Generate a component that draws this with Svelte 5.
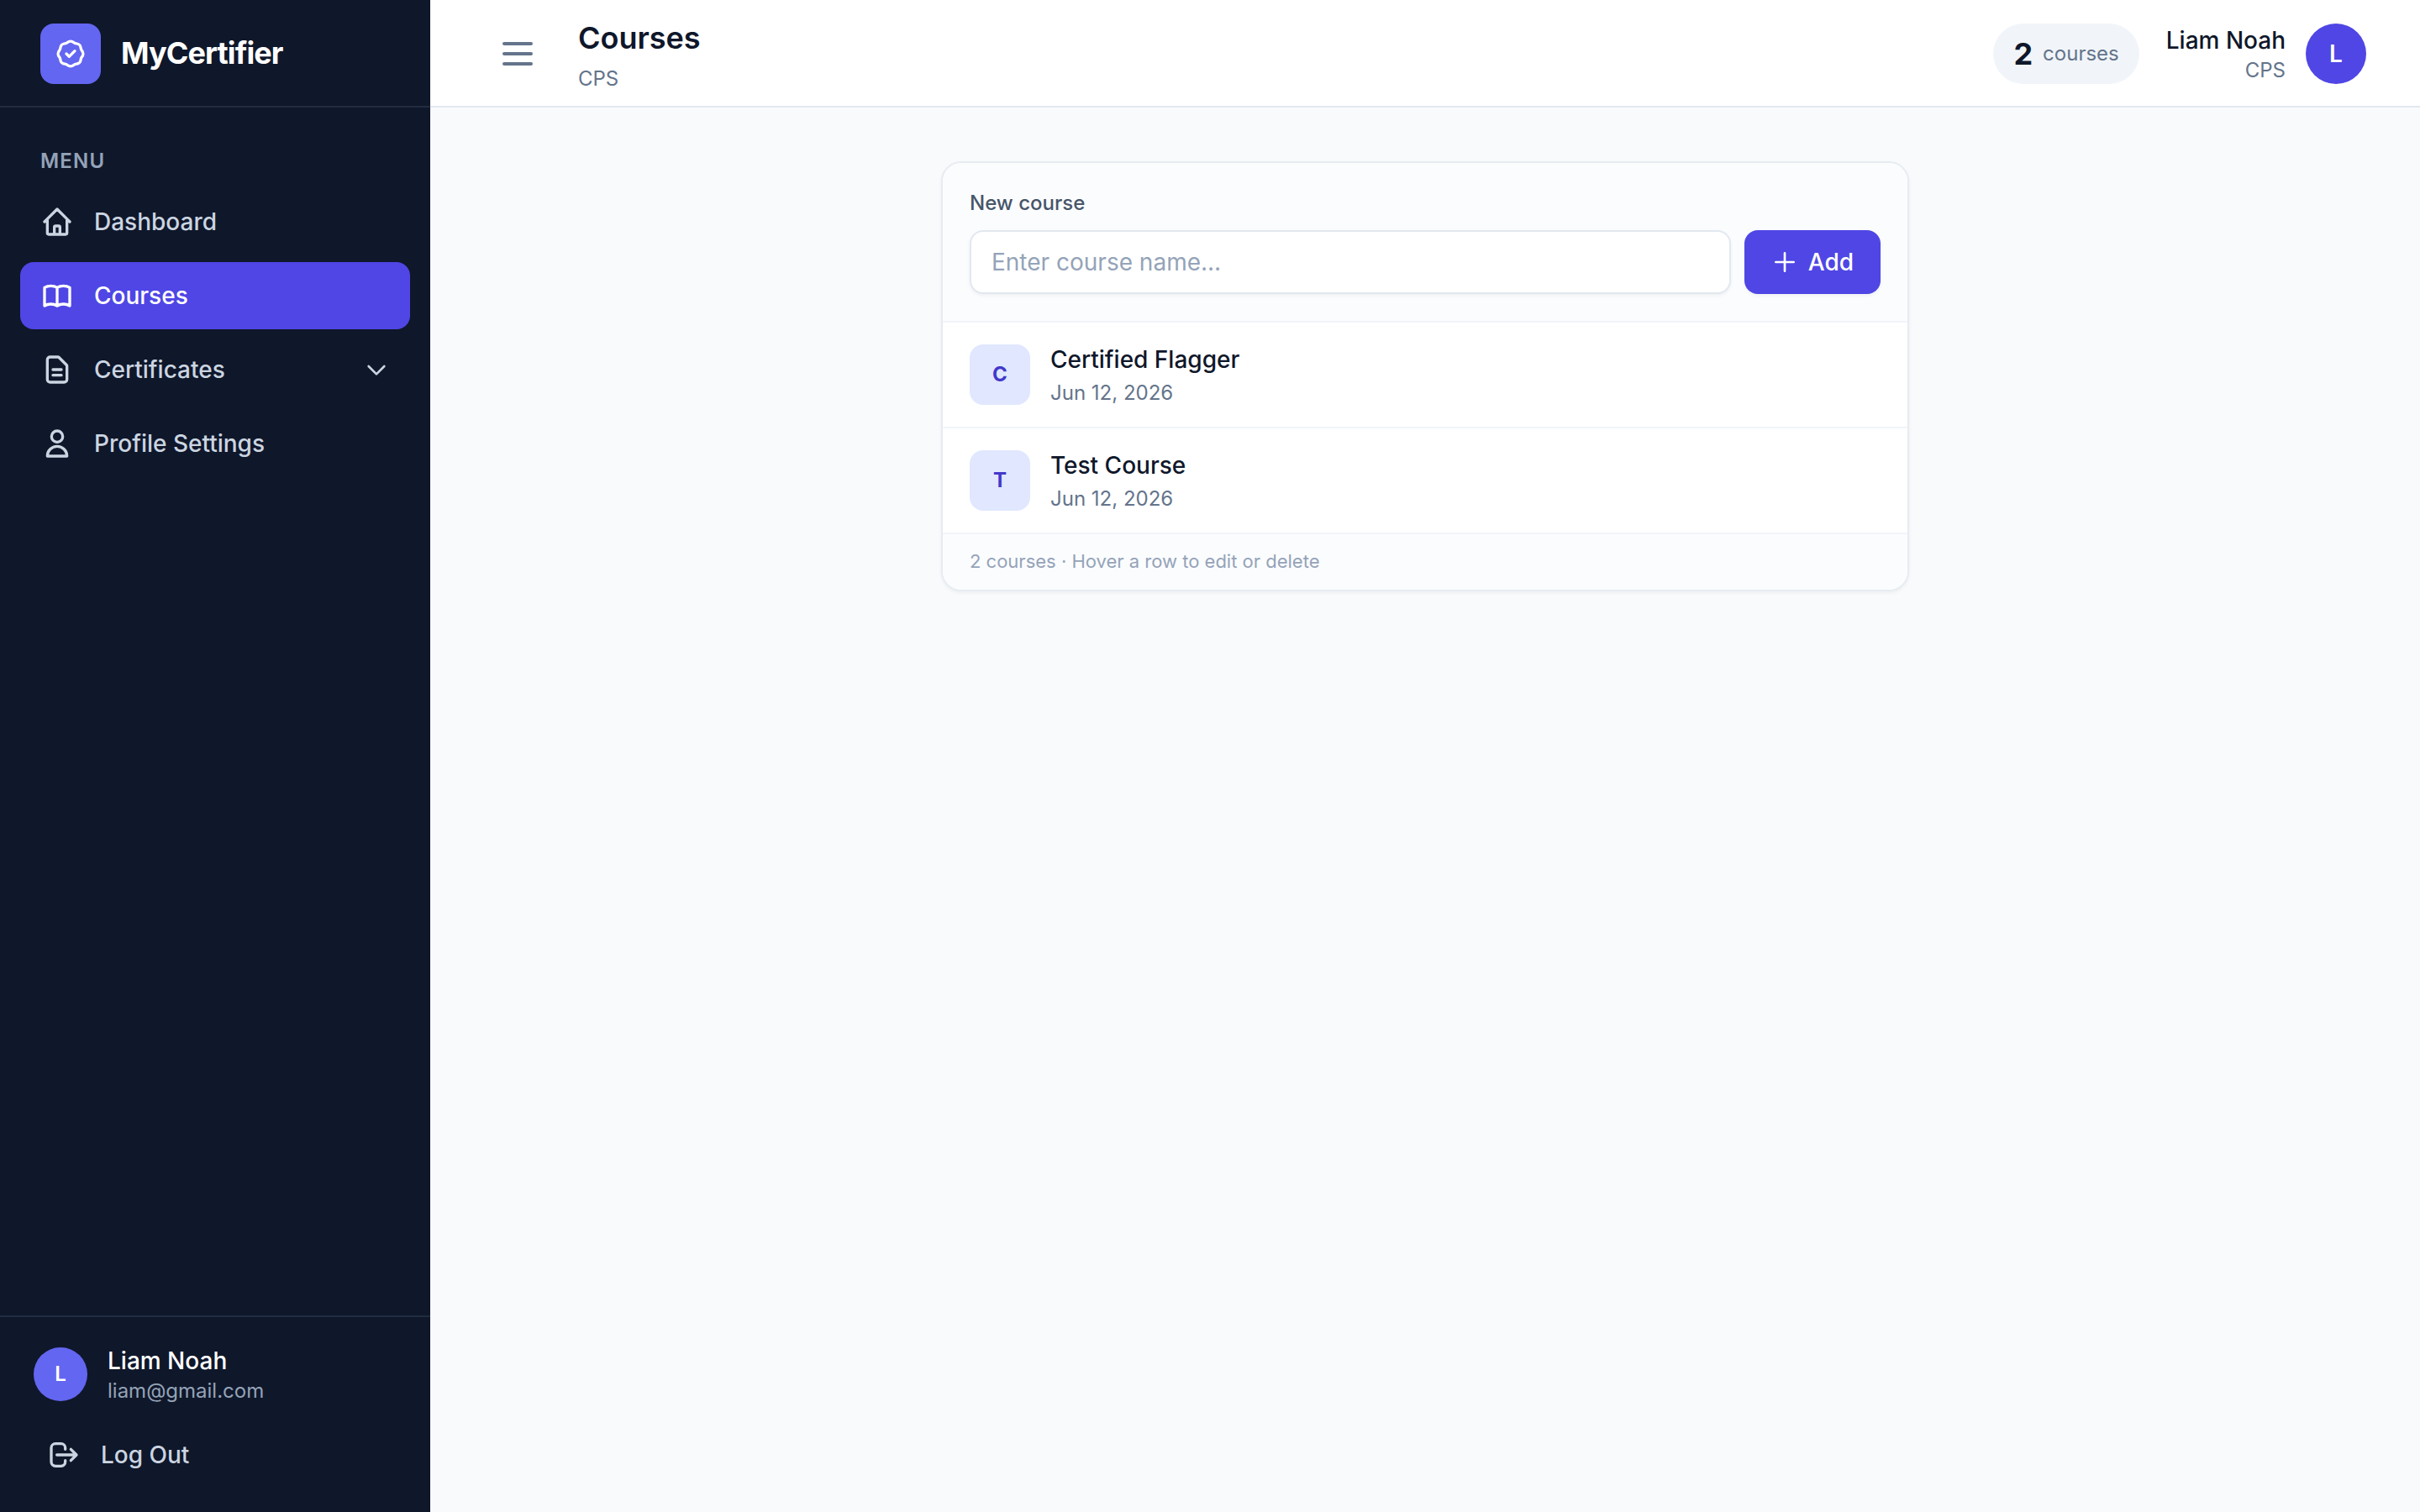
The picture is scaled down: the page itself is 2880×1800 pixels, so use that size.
<script>
	const icons = {
		badge: 'M9 12l2 2 4-4M7.835 4.697a3.42 3.42 0 001.946-.806 3.42 3.42 0 014.438 0 3.42 3.42 0 001.946.806 3.42 3.42 0 013.138 3.138 3.42 3.42 0 00.806 1.946 3.42 3.42 0 010 4.438 3.42 3.42 0 00-.806 1.946 3.42 3.42 0 01-3.138 3.138 3.42 3.42 0 00-1.946.806 3.42 3.42 0 01-4.438 0 3.42 3.42 0 00-1.946-.806 3.42 3.42 0 01-3.138-3.138 3.42 3.42 0 00-.806-1.946 3.42 3.42 0 010-4.438 3.42 3.42 0 00.806-1.946 3.42 3.42 0 013.138-3.138z',
		home: 'M3 12l2-2m0 0l7-7 7 7M5 10v10a1 1 0 001 1h3m10-11l2 2m-2-2v10a1 1 0 01-1 1h-3m-6 0a1 1 0 001-1v-4a1 1 0 011-1h2a1 1 0 011 1v4a1 1 0 001 1m-6 0h6',
		book: 'M12 6.253v13m0-13C10.832 5.477 9.246 5 7.5 5S4.168 5.477 3 6.253v13C4.168 18.477 5.754 18 7.5 18s3.332.477 4.5 1.253m0-13C13.168 5.477 14.754 5 16.5 5c1.747 0 3.332.477 4.5 1.253v13C19.832 18.477 18.247 18 16.5 18c-1.746 0-3.332.477-4.5 1.253',
		document: 'M9 12h6m-6 4h6m2 5H7a2 2 0 01-2-2V5a2 2 0 012-2h5.586a1 1 0 01.707.293l5.414 5.414a1 1 0 01.293.707V19a2 2 0 01-2 2z',
		user: 'M16 7a4 4 0 11-8 0 4 4 0 018 0zM12 14a7 7 0 00-7 7h14a7 7 0 00-7-7z',
		logout: 'M17 16l4-4m0 0l-4-4m4 4H7m6 4v1a3 3 0 01-3 3H6a3 3 0 01-3-3V7a3 3 0 013-3h4a3 3 0 013 3v1',
		chevron: 'M19 9l-7 7-7-7',
		bars: 'M4 6h16M4 12h16M4 18h16',
		plus: 'M12 4v16m8-8H4'
	};

	const menu = [
		{ label: 'Dashboard', icon: 'home' },
		{ label: 'Courses', icon: 'book' },
		{ label: 'Certificates', icon: 'document', expandable: true },
		{ label: 'Profile Settings', icon: 'user' }
	];

	let active = $state('Courses');
	let name = $state('');
	let courses = $state([
		{ name: 'Certified Flagger', date: 'Jun 12, 2026' },
		{ name: 'Test Course', date: 'Jun 12, 2026' }
	]);

	function addCourse(e) {
		e.preventDefault();
		if (!name.trim()) return;
		courses.push({ name: name.trim(), date: 'Jun 12, 2026' });
		name = '';
	}
</script>

{#snippet icon(id, size)}
	<svg width={size} height={size} viewBox="0 0 24 24" fill="none" stroke="currentColor" stroke-width="2" stroke-linecap="round" stroke-linejoin="round" aria-hidden="true">
		<path d={icons[id]} />
	</svg>
{/snippet}

<div class="app">
	<aside>
		<div class="brand">
			<span class="logo">{@render icon('badge', 40)}</span>
			<span class="brand-name">MyCertifier</span>
		</div>

		<nav>
			<p class="menu-title">MENU</p>
			{#each menu as item}
				<button class="nav-item" class:active={item.label === active} onclick={() => (active = item.label)}>
					{@render icon(item.icon, 40)}
					<span class="nav-label">{item.label}</span>
					{#if item.expandable}
						{@render icon('chevron', 32)}
					{/if}
				</button>
			{/each}
		</nav>

		<div class="account">
			<div class="account-user">
				<span class="avatar small">L</span>
				<div>
					<p class="account-name">Liam Noah</p>
					<p class="account-mail">liam@gmail.com</p>
				</div>
			</div>
			<button class="logout">
				{@render icon('logout', 40)}
				<span>Log Out</span>
			</button>
		</div>
	</aside>

	<div class="page">
		<header>
			<button class="toggle" aria-label="Toggle sidebar">{@render icon('bars', 48)}</button>
			<div class="heading">
				<h1>Courses</h1>
				<p>CPS</p>
			</div>
			<div class="pill"><strong>{courses.length}</strong><span>courses</span></div>
			<div class="who">
				<p class="who-name">Liam Noah</p>
				<p class="who-org">CPS</p>
			</div>
			<span class="avatar">L</span>
		</header>

		<main>
			<section class="card">
				<form onsubmit={addCourse}>
					<label for="course">New course</label>
					<div class="fields">
						<input id="course" type="text" placeholder="Enter course name..." bind:value={name} />
						<button class="add">{@render icon('plus', 32)}<span>Add</span></button>
					</div>
				</form>
				{#each courses as course}
					<div class="row">
						<span class="initial">{course.name[0]}</span>
						<div>
							<p class="course-name">{course.name}</p>
							<p class="course-date">{course.date}</p>
						</div>
					</div>
				{/each}
				<p class="hint">{courses.length} courses · Hover a row to edit or delete</p>
			</section>
		</main>
	</div>
</div>

<style>
	:global(body) {
		margin: 0;
		background: #f8fafc;
	}

	.app {
		display: flex;
		height: 100vh;
		font-family: Inter, sans-serif;
		font-size: 28px;
		line-height: 40px;
		color: #0f172a;
	}

	.app * {
		box-sizing: border-box;
	}

	p,
	h1 {
		margin: 0;
	}

	button,
	input {
		font: inherit;
		color: inherit;
		border: none;
		background: none;
	}

	button {
		cursor: pointer;
	}

	svg {
		display: block;
		flex-shrink: 0;
	}

	aside {
		width: 512px;
		flex-shrink: 0;
		display: flex;
		flex-direction: column;
		background: #0f172a;
		color: #cbd5e1;
	}

	.brand {
		height: 128px;
		display: flex;
		align-items: center;
		gap: 24px;
		padding: 2px 48px 0;
		border-bottom: 2px solid #212c40;
	}

	.logo {
		width: 72px;
		height: 72px;
		display: grid;
		place-items: center;
		border-radius: 16px;
		background: #6366f1;
		color: #fff;
	}

	.brand-name {
		margin-bottom: 2px;
		font-size: 36px;
		font-weight: 700;
		letter-spacing: -0.025em;
		color: #fff;
	}

	nav {
		flex: 1;
		display: flex;
		flex-direction: column;
		gap: 8px;
		padding: 40px 24px;
	}

	.menu-title {
		height: 48px;
		padding: 8px 24px 0;
		font-size: 24px;
		line-height: 32px;
		font-weight: 600;
		letter-spacing: 0.05em;
		color: #94a3b8;
	}

	.nav-item {
		height: 80px;
		display: flex;
		align-items: center;
		gap: 24px;
		padding: 0 24px;
		border-radius: 16px;
		font-weight: 500;
		text-align: left;
	}

	.nav-item.active {
		background: #4f46e5;
		color: #fff;
	}

	.nav-label {
		flex: 1;
	}

	.account {
		height: 234px;
		padding: 32px 24px;
		border-top: 2px solid #212c40;
	}

	.account-user {
		display: flex;
		align-items: center;
		gap: 24px;
		padding: 0 16px;
	}

	.avatar {
		width: 72px;
		height: 72px;
		flex-shrink: 0;
		display: grid;
		place-items: center;
		border-radius: 50%;
		background: #4f46e5;
		color: #fff;
		font-weight: 600;
	}

	.avatar.small {
		width: 64px;
		height: 64px;
		background: #6366f1;
		font-size: 24px;
	}

	.account-name {
		font-weight: 500;
		color: #fff;
	}

	.account-mail {
		font-size: 24px;
		line-height: 32px;
		color: #94a3b8;
	}

	.logout {
		width: 100%;
		height: 72px;
		margin-top: 24px;
		display: flex;
		align-items: center;
		gap: 24px;
		padding: 0 32px;
		font-weight: 500;
	}

	.page {
		flex: 1;
		display: flex;
		flex-direction: column;
	}

	header {
		height: 128px;
		display: flex;
		align-items: center;
		padding: 2px 64px 0;
		background: #fff;
		border-bottom: 2px solid #e2e8f0;
	}

	.toggle {
		padding: 16px;
		color: #64748b;
	}

	.heading {
		flex: 1;
		margin-left: 32px;
	}

	h1 {
		margin-bottom: 6px;
		font-size: 36px;
		line-height: 54px;
		font-weight: 600;
	}

	.heading p,
	.who-org {
		font-size: 24px;
		line-height: 32px;
		color: #64748b;
	}

	.pill {
		height: 72px;
		display: flex;
		align-items: center;
		gap: 12px;
		padding: 0 24px;
		border-radius: 36px;
		background: #f1f5f9;
	}

	.pill strong {
		font-size: 36px;
		font-weight: 700;
	}

	.pill span {
		font-size: 24px;
		color: #64748b;
	}

	.who {
		margin: 0 24px 0 32px;
		text-align: right;
	}

	.who-name {
		font-weight: 500;
	}

	main {
		padding: 64px;
	}

	.card {
		width: 1152px;
		margin: 0 auto;
		overflow: hidden;
		border: 2px solid #e7ecf2;
		border-radius: 24px;
		background: #fff;
		box-shadow: 0 2px 4px rgb(0 0 0 / 0.05);
	}

	form {
		padding: 32px;
		background: #fbfcfe;
	}

	label {
		display: block;
		margin-bottom: 16px;
		font-size: 24px;
		line-height: 32px;
		font-weight: 500;
		color: #475569;
	}

	.fields {
		display: flex;
		gap: 16px;
	}

	input {
		flex: 1;
		height: 76px;
		padding: 0 24px;
		border: 2px solid #e2e8f0;
		border-radius: 16px;
		background: #fff;
		box-shadow: 0 2px 4px rgb(0 0 0 / 0.05);
	}

	input::placeholder {
		color: #94a3b8;
		opacity: 1;
	}

	.add {
		height: 76px;
		display: flex;
		align-items: center;
		gap: 12px;
		padding: 0 32px;
		border-radius: 16px;
		background: #4f46e5;
		color: #fff;
		font-weight: 500;
		box-shadow: 0 2px 4px rgb(0 0 0 / 0.05);
	}

	.row {
		height: 126px;
		display: flex;
		align-items: center;
		gap: 24px;
		padding: 0 32px;
		border-top: 2px solid #f1f5f9;
	}

	.initial {
		width: 72px;
		height: 72px;
		display: grid;
		place-items: center;
		border-radius: 16px;
		background: #e0e7ff;
		color: #4338ca;
		font-size: 24px;
		font-weight: 700;
	}

	.course-name {
		font-weight: 500;
	}

	.course-date {
		margin-top: 4px;
		font-size: 24px;
		line-height: 32px;
		color: #64748b;
	}

	.hint {
		height: 68px;
		padding: 16px 32px;
		font-size: 22px;
		line-height: 32px;
		color: #94a3b8;
		border-top: 2px solid #f1f5f9;
		background: #fbfcfe;
	}
</style>
